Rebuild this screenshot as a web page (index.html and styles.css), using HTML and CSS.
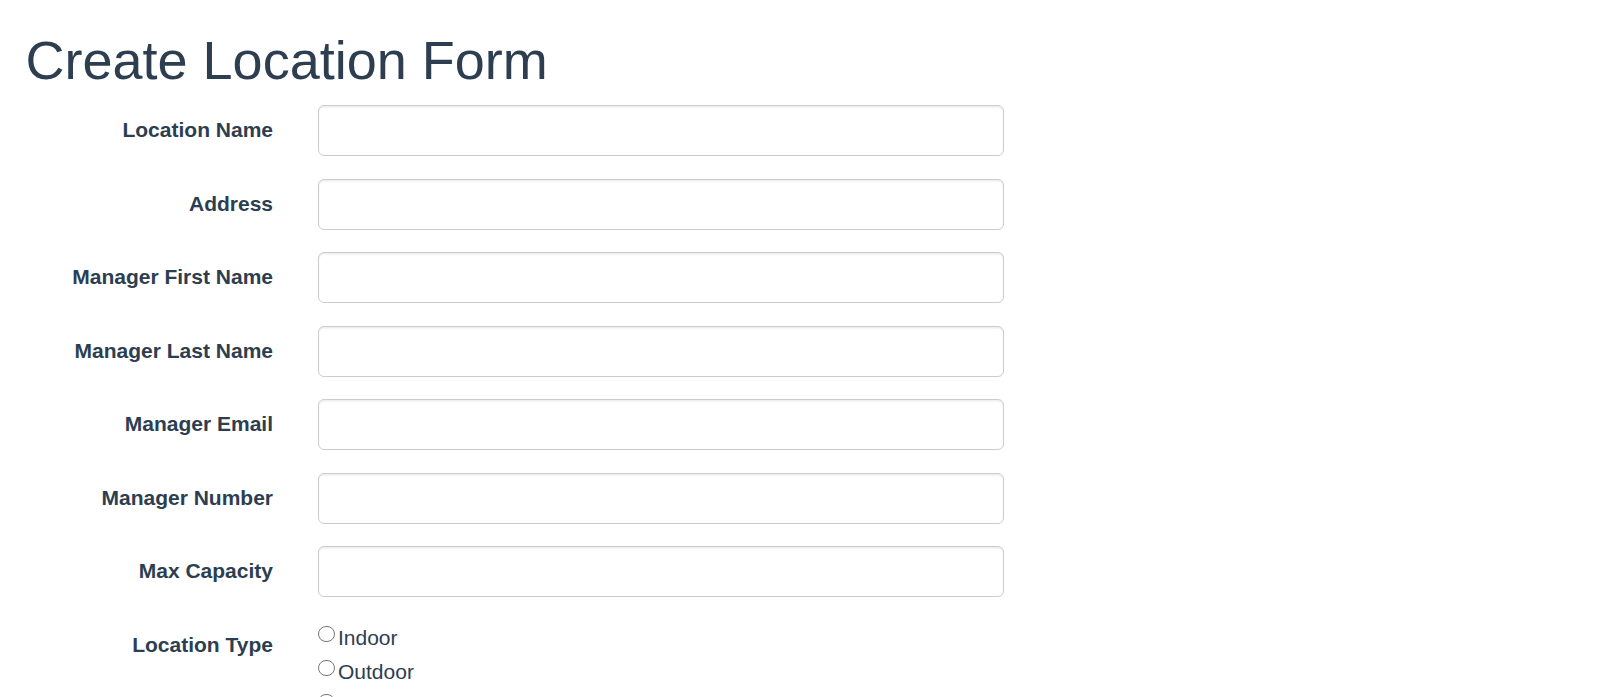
FILE: index.html
```html
<!DOCTYPE html>
<html lang="en">
<head>
<meta charset="utf-8">
<title>Create Location Form</title>
<link rel="stylesheet" href="styles.css">
</head>
<body>
<div class="container">
  <h1 class="title">Create Location Form</h1>
  <form class="form">
    <div class="form-group">
      <label class="control-label" for="name">Location Name</label>
      <input class="form-control" id="name" type="text">
    </div>
    <div class="form-group">
      <label class="control-label" for="address">Address</label>
      <input class="form-control" id="address" type="text">
    </div>
    <div class="form-group">
      <label class="control-label" for="first">Manager First Name</label>
      <input class="form-control" id="first" type="text">
    </div>
    <div class="form-group">
      <label class="control-label" for="last">Manager Last Name</label>
      <input class="form-control" id="last" type="text">
    </div>
    <div class="form-group">
      <label class="control-label" for="email">Manager Email</label>
      <input class="form-control" id="email" type="text">
    </div>
    <div class="form-group">
      <label class="control-label" for="number">Manager Number</label>
      <input class="form-control" id="number" type="text">
    </div>
    <div class="form-group">
      <label class="control-label" for="cap">Max Capacity</label>
      <input class="form-control" id="cap" type="text">
    </div>
    <div class="form-group">
      <span class="control-label">Location Type</span>
      <div class="radio-group">
        <label class="radio-option"><input class="radio" type="radio" name="type">Indoor</label>
        <label class="radio-option"><input class="radio" type="radio" name="type">Outdoor</label>
        <label class="radio-option"><input class="radio" type="radio" name="type">Patio</label>
      </div>
    </div>
  </form>
</div>
</body>
</html>
```
FILE: styles.css
```css
html, body {
  margin: 0;
  padding: 0;
  background: #ffffff;
}

body {
  font-family: "Liberation Sans", Arial, Helvetica, sans-serif;
  color: #2c3e50;
  font-size: 21px;
  line-height: 30px;
  overflow: hidden;
}

.container {
  padding: 0 0 0 25.5px;
}

.title {
  margin: 31px 0 15px 0;
  font-size: 54px;
  line-height: 59.4px;
  font-weight: 400;
  color: #2c3e50;
}

.form {
  margin: 0;
}

.form-group {
  display: flex;
  align-items: flex-start;
  gap: 45px;
  margin-bottom: 22.5px;
}

.control-label {
  display: block;
  width: 247.5px;
  flex: none;
  text-align: right;
  font-weight: 700;
  font-size: 21px;
  line-height: 30px;
  padding-top: 10px;
  color: #2c3e50;
}

.form-control {
  display: block;
  box-sizing: border-box;
  width: 686px;
  height: 51px;
  margin: 0;
  padding: 9px 18px;
  border: 1px solid #cccccc;
  border-radius: 6px;
  box-shadow: inset 0 1.5px 1.5px rgba(0, 0, 0, 0.075);
  background: #ffffff;
  font-family: inherit;
  font-size: 21px;
  color: #2c3e50;
}

.radio-group {
  padding-top: 1.4px;
}

.radio-option {
  display: block;
  line-height: 34px;
  font-size: 21px;
  font-weight: 400;
  color: #2c3e50;
}

.radio {
  -webkit-appearance: none;
  appearance: none;
  box-sizing: border-box;
  width: 16.5px;
  height: 16.5px;
  margin: 0 3.5px 3px 0;
  border: 1px solid #767676;
  border-radius: 50%;
  background: #ffffff;
  vertical-align: baseline;
}
```
